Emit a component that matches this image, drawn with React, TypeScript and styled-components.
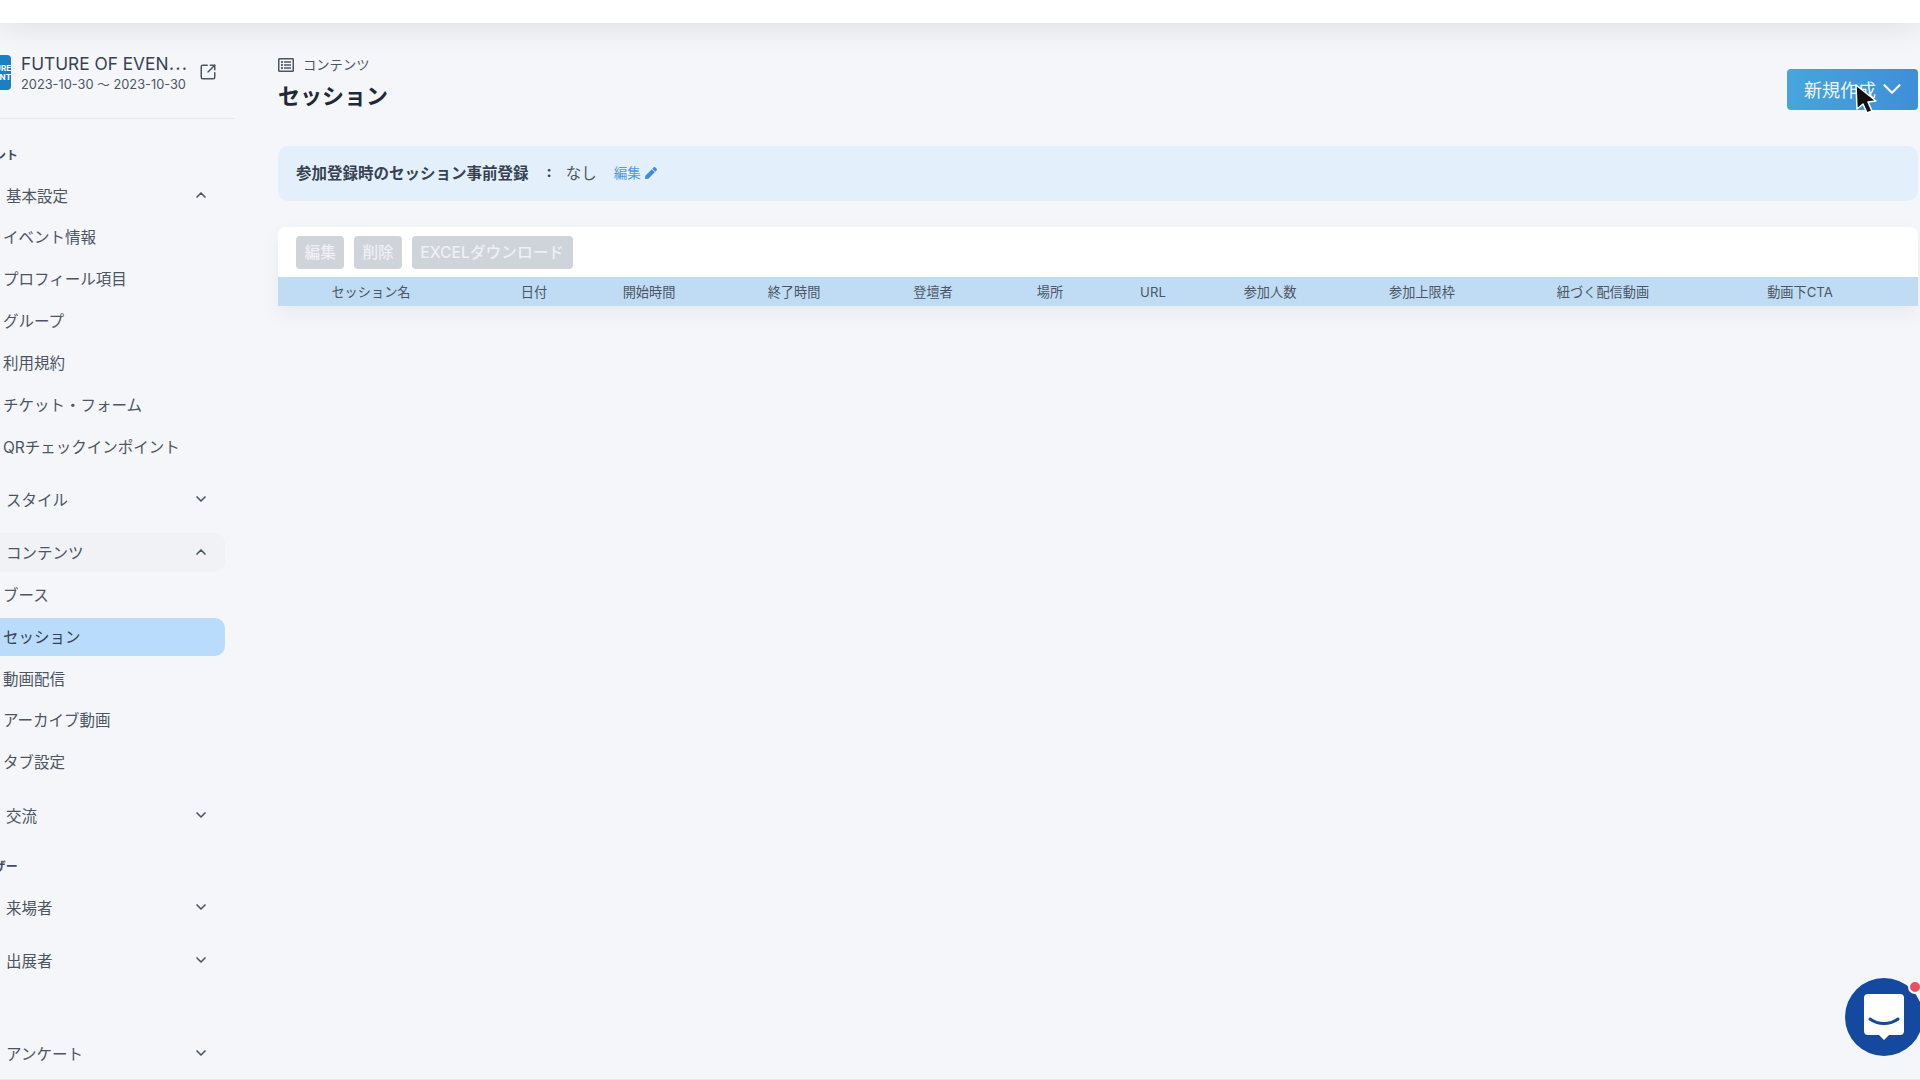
import styled, { createGlobalStyle } from "styled-components";
import { ChevronDown, ChevronUp, SquareArrowOutUpRight } from "lucide-react";
import { FaPen, FaRegListAlt } from "react-icons/fa";

const GlobalStyle = createGlobalStyle`
  html, body {
    margin: 0;
    padding: 0;
    background: #f5f6f9;
  }
  * {
    box-sizing: border-box;
  }
  body {
    font-family: Inter, "Noto Sans CJK JP", "Noto Sans", sans-serif;
    color: #4b5563;
  }
`;

const Page = styled.div`
  position: relative;
  width: 1920px;
  height: 1080px;
  overflow: hidden;
  background: #f5f6f9;
  border-bottom: 1px solid #e5e7eb;
  display: flex;
  flex-direction: column;
`;

const TopBar = styled.div`
  height: 23px;
  flex: none;
  background: #fff;
  box-shadow: 0 4px 28px rgba(17, 24, 39, 0.11);
  position: relative;
  z-index: 2;
`;

const Body = styled.div`
  flex: 1;
  display: flex;
  min-height: 0;
`;

const Sidebar = styled.aside`
  width: 235px;
  flex: none;
  overflow: hidden;
`;

const EventHeader = styled.div`
  height: 96px;
  padding-top: 32px;
  display: flex;
  align-items: flex-start;
  border-bottom: 1px solid #e8eaee;
`;

const EventLogo = styled.div`
  width: 35px;
  height: 35px;
  flex: none;
  margin-left: -24px;
  border-radius: 4px;
  background: #1b7fc4;
  color: #fff;
  font-size: 8px;
  line-height: 9px;
  font-weight: 700;
  text-align: right;
  padding-top: 9px;
  overflow: hidden;
`;

const EventInfo = styled.div`
  width: 166px;
  margin-left: 10px;
  margin-top: -2px;
`;

const EventName = styled.div`
  font-size: 17.3px;
  line-height: 22px;
  color: #374151;
  white-space: nowrap;
`;

const EventDate = styled.div`
  font-size: 12.8px;
  line-height: 18px;
  margin-top: 1px;
  color: #4b5563;
  white-space: nowrap;
`;

const EventLink = styled.div`
  margin: 8px 0 0 12px;
  color: #4b5563;
  display: flex;
`;

const Nav = styled.nav`
  width: 225px;
  display: flex;
  flex-direction: column;
`;

const SectionLabel = styled.div`
  height: 20px;
  margin: 9px 0 10.5px -30px;
  font-size: 12px;
  line-height: 20px;
  font-weight: 700;
  color: #3f4d63;
  white-space: nowrap;
`;

const FirstLabel = styled(SectionLabel)`
  margin-top: 27px;
  margin-bottom: 9.5px;
`;

const Group = styled.div`
  margin-bottom: 14px;
`;

const GroupHeader = styled.div<{ $open?: boolean }>`
  height: 39px;
  padding: 0 16px 0 6px;
  display: flex;
  align-items: center;
  justify-content: space-between;
  font-size: 15.5px;
  border-radius: 0 10px 10px 0;
  background: ${(p) => (p.$open ? "#f0f2f5" : "transparent")};
`;

const SubItem = styled.div<{ $active?: boolean }>`
  height: 38px;
  margin-top: 3.9px;
  padding: 0 0 2px 3px;
  display: flex;
  align-items: center;
  font-size: 15.5px;
  color: ${(p) => (p.$active ? "#374151" : "#4b5563")};
  border-radius: 0 10px 10px 0;
  background: ${(p) => (p.$active ? "#b9dcfd" : "transparent")};
`;

const Main = styled.main`
  flex: 1;
  min-width: 0;
  padding: 0 2px 0 43px;
`;

const PageHead = styled.div`
  height: 123px;
  padding-top: 33px;
  display: flex;
  justify-content: space-between;
  align-items: flex-start;
`;

const Breadcrumb = styled.div`
  display: flex;
  align-items: center;
  gap: 9px;
  font-size: 13.3px;
  line-height: 18px;
  color: #4b5563;
`;

const Title = styled.h1`
  margin: 6px 0 0;
  font-size: 22px;
  line-height: 32px;
  font-weight: 700;
  color: #1f2937;
`;

const CreateButton = styled.button`
  width: 131px;
  height: 41px;
  margin-top: 13px;
  padding: 0 0 2px 17px;
  border: none;
  border-radius: 4px;
  background: linear-gradient(90deg, #45a6dc, #3f8ed8);
  color: #eef6fc;
  font: inherit;
  font-size: 18px;
  display: flex;
  align-items: center;
  gap: 1px;
`;

const InfoBar = styled.div`
  height: 55px;
  padding: 0 0 4px 18px;
  display: flex;
  align-items: center;
  border-radius: 10px;
  background: #e3f0fb;
  font-size: 15.5px;
`;

const InfoLabel = styled.span`
  font-weight: 700;
  color: #374151;
`;

const InfoColon = styled.span`
  margin: 0 14px 0 18px;
  font-weight: 700;
  color: #374151;
`;

const InfoEdit = styled.span`
  margin-left: 17px;
  display: flex;
  align-items: center;
  gap: 4px;
  font-size: 13.5px;
  color: #4a9be0;

  svg {
    margin-top: 3px;
  }
`;

const TableCard = styled.section`
  margin-top: 26px;
  border-radius: 8px 8px 0 0;
  background: #fff;
  box-shadow: 0 8px 20px rgba(17, 24, 39, 0.05);
`;

const TableTools = styled.div`
  height: 50px;
  padding: 9px 18px 0;
  display: flex;
  align-items: flex-start;
  gap: 9.5px;
`;

const ToolButton = styled.button`
  height: 33px;
  padding: 0 8.5px 3px;
  border: none;
  border-radius: 4px;
  background: #cfd4da;
  color: #eef0f3;
  font: inherit;
  font-size: 15.7px;
  font-weight: 500;
`;

const HeaderRow = styled.div`
  height: 29px;
  display: grid;
  grid-template-columns: 186px 140px 90px 200px 78px 156px 50px 184px 120px 242px 152px;
  align-items: center;
  background: #c0dcf5;
  font-size: 13.2px;
  color: #4b5563;
  text-align: center;
`;

const ChatBubble = styled.div`
  position: absolute;
  left: 1845px;
  top: 978px;
  width: 78px;
  height: 78px;
  border-radius: 50%;
  background: #134a9f;
  display: flex;
  align-items: center;
  justify-content: center;
`;

const ChatDot = styled.div`
  position: absolute;
  left: 1908px;
  top: 980px;
  width: 14px;
  height: 14px;
  border-radius: 50%;
  background: #e8525e;
  border: 2px solid #f5f6f9;
`;

const Cursor = styled.svg`
  position: absolute;
  left: 1853px;
  top: 82px;
  z-index: 3;
`;

const settings = ["イベント情報", "プロフィール項目", "グループ", "利用規約", "チケット・フォーム", "QRチェックインポイント"];
const contents = ["ブース", "セッション", "動画配信", "アーカイブ動画", "タブ設定"];
const columns = ["セッション名", "日付", "開始時間", "終了時間", "登壇者", "場所", "URL", "参加人数", "参加上限枠", "紐づく配信動画", "動画下CTA"];

function NavGroup({ label, items, active, highlight }: { label: string; items?: string[]; active?: string; highlight?: boolean }) {
  const Chevron = items ? ChevronUp : ChevronDown;
  return (
    <Group>
      <GroupHeader $open={highlight}>
        {label}
        <Chevron size={16} strokeWidth={2.5} color="#4b5563" />
      </GroupHeader>
      {items?.map((item) => (
        <SubItem key={item} $active={item === active}>
          {item}
        </SubItem>
      ))}
    </Group>
  );
}

export default function App() {
  return (
    <Page>
      <GlobalStyle />
      <TopBar />
      <Body>
        <Sidebar>
          <EventHeader>
            <EventLogo>
              FUTURE
              <br />
              EVENT
            </EventLogo>
            <EventInfo>
              <EventName>FUTURE OF EVEN⋯</EventName>
              <EventDate>2023-10-30 〜 2023-10-30</EventDate>
            </EventInfo>
            <EventLink>
              <SquareArrowOutUpRight size={18} strokeWidth={2} />
            </EventLink>
          </EventHeader>
          <Nav>
            <FirstLabel>イベント</FirstLabel>
            <NavGroup label="基本設定" items={settings} />
            <NavGroup label="スタイル" />
            <NavGroup label="コンテンツ" items={contents} active="セッション" highlight />
            <NavGroup label="交流" />
            <SectionLabel>ユーザー</SectionLabel>
            <NavGroup label="来場者" />
            <NavGroup label="出展者" />
            <SectionLabel />
            <NavGroup label="アンケート" />
          </Nav>
        </Sidebar>
        <Main>
          <PageHead>
            <div>
              <Breadcrumb>
                <FaRegListAlt size={16} />
                コンテンツ
              </Breadcrumb>
              <Title>セッション</Title>
            </div>
            <CreateButton>
              新規作成
              <ChevronDown size={30} strokeWidth={1.8} />
            </CreateButton>
          </PageHead>
          <InfoBar>
            <InfoLabel>参加登録時のセッション事前登録</InfoLabel>
            <InfoColon>:</InfoColon>
            なし
            <InfoEdit>
              編集
              <FaPen size={12} color="#3f8ed8" />
            </InfoEdit>
          </InfoBar>
          <TableCard>
            <TableTools>
              <ToolButton>編集</ToolButton>
              <ToolButton>削除</ToolButton>
              <ToolButton>EXCELダウンロード</ToolButton>
            </TableTools>
            <HeaderRow>
              {columns.map((column) => (
                <div key={column}>{column}</div>
              ))}
            </HeaderRow>
          </TableCard>
        </Main>
      </Body>
      <ChatBubble>
        <svg width="42" height="48" viewBox="0 0 42 48">
          <path
            d="M5 1h32a4 4 0 0 1 4 4v33a4 4 0 0 1-4 4h-11l-5 5-5-5h-11a4 4 0 0 1-4-4v-33a4 4 0 0 1 4-4z"
            fill="#fff"
          />
          <path d="M7 26c8 6 20 6 28 0" fill="none" stroke="#134a9f" strokeWidth="3" strokeLinecap="round" />
        </svg>
      </ChatBubble>
      <ChatDot />
      <Cursor width="26" height="36" viewBox="0 0 26 36">
        <path
          d="M3 3l1 24 6-5 4 9 5-2-4-9 8-1z"
          fill="#111"
          stroke="#fff"
          strokeWidth="1.5"
          strokeLinejoin="round"
        />
      </Cursor>
    </Page>
  );
}
